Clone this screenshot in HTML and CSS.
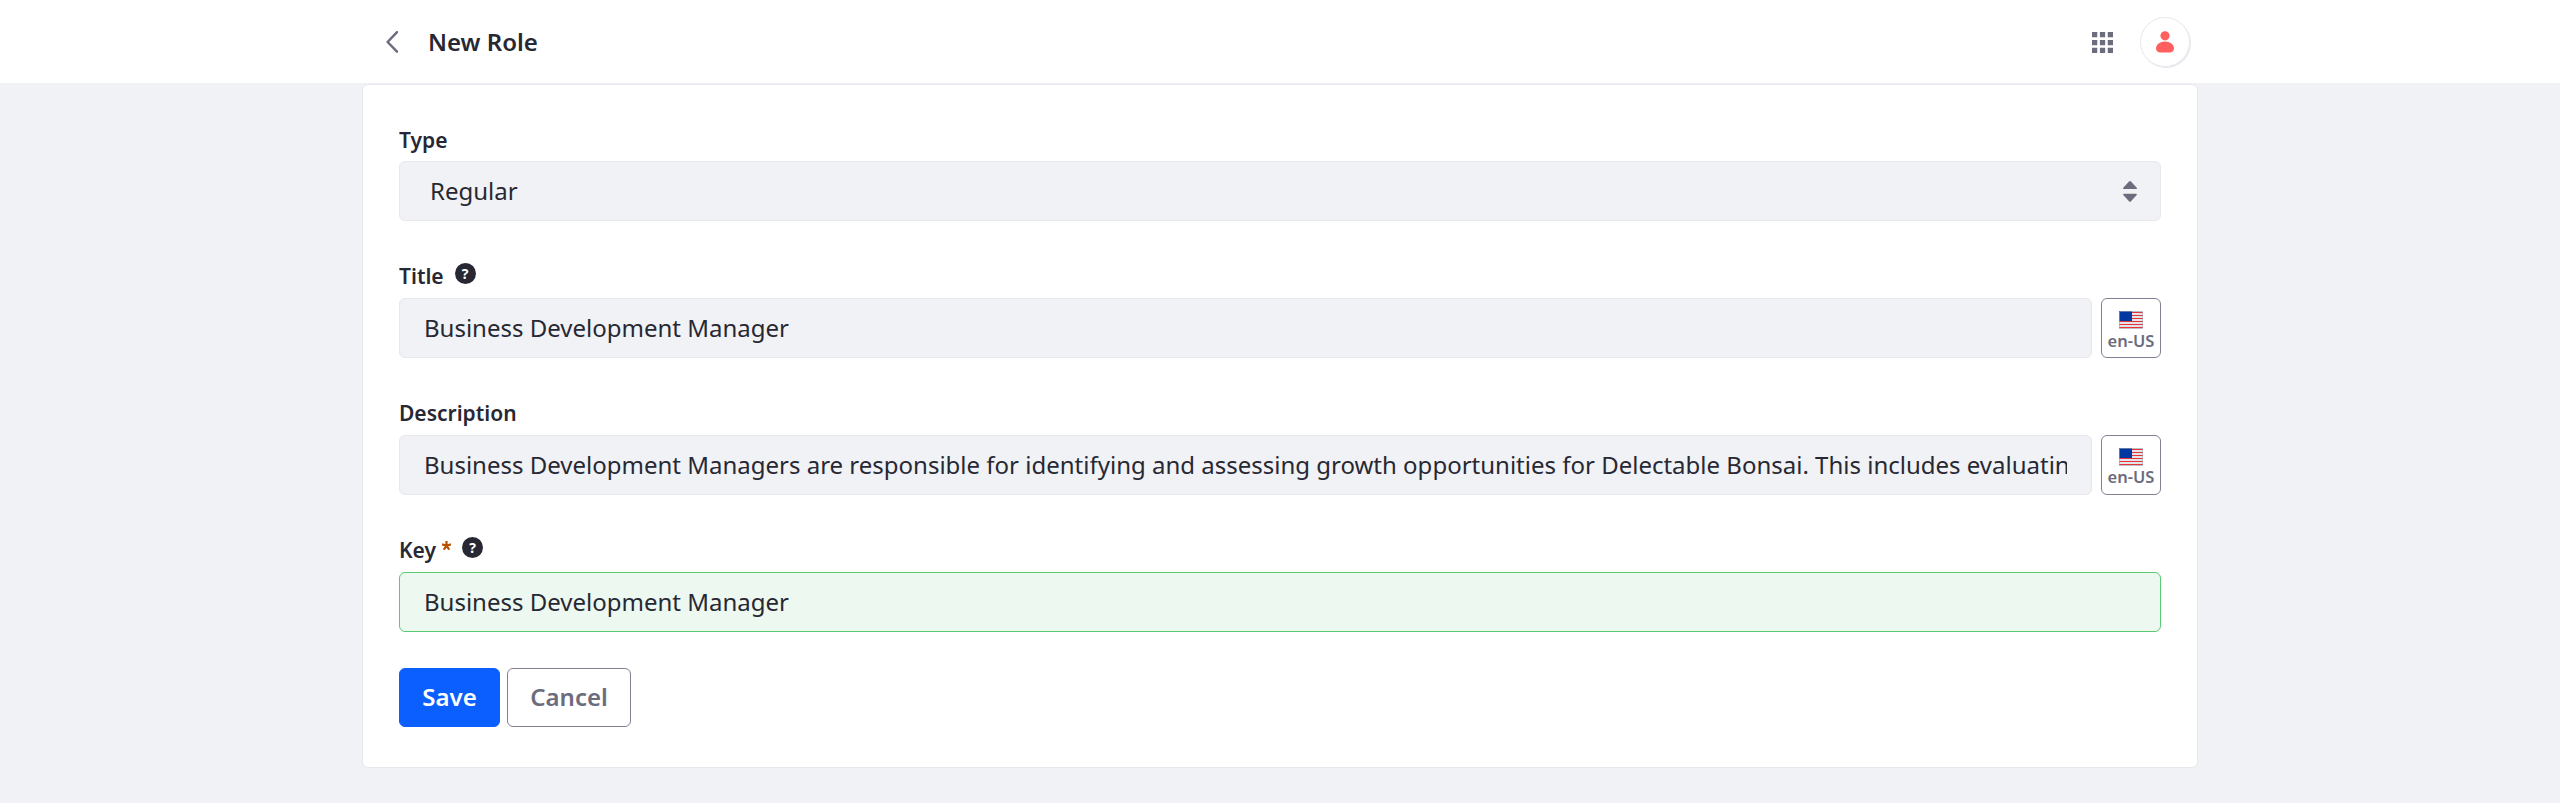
FILE: index.html
```html
<!DOCTYPE html>
<html lang="en-US">
<head>
<meta charset="utf-8">
<title>New Role</title>
<link rel="stylesheet" href="styles.css">
</head>
<body>
<header class="topbar">
  <div class="topbar-inner">
    <a class="back" aria-label="Back"><svg width="12" height="22" viewBox="0 0 12 22"><path d="M11 1.200 1.600 11 11 20.600" fill="none" stroke="currentColor" stroke-width="2.500" stroke-linecap="round" stroke-linejoin="round"/></svg></a>
    <h1 class="heading">New Role</h1>
    <svg class="apps" width="21" height="21" viewBox="0 0 21 21"><path d="M0 0h5.250v5.250H0zM7.900 0h5.250v5.250H7.900zM15.750 0H21v5.250h-5.250zM0 7.900h5.250v5.250H0zM7.900 7.900h5.250v5.250H7.900zM15.750 7.900H21v5.250h-5.250zM0 15.750h5.250V21H0zM7.900 15.750h5.250V21H7.900zM15.750 15.750H21V21h-5.250z" fill="currentColor"/></svg>
    <span class="avatar"><svg width="18" height="22" viewBox="0 0 18 22"><circle cx="9" cy="4.800" r="4.600" fill="currentColor"/><path d="M9 10.600c5 0 9 3 9 6.900 0 2.800-2 4-4.500 4h-9C2 21.500 0 20.300 0 17.500c0-3.900 4-6.900 9-6.900z" fill="currentColor"/></svg></span>
  </div>
</header>
<main class="card">
  <div class="field">
    <label class="label first">Type</label>
    <div class="control select"><span>Regular</span><svg width="14" height="21" viewBox="0 0 14 21"><path d="M6 .6q1-1 2 0l5.700 6.200q.7 1.200-.7 1.200H1q-1.400 0-.7-1.200zM6 20.200q1 1 2 0l5.700-6.200q.7-1.200-.7-1.200H1q-1.400 0-.7 1.200z" fill="currentColor"/></svg></div>
  </div>
  <div class="field">
    <label class="label">Title <span class="help">?</span></label>
    <div class="row">
      <div class="control"><span>Business Development Manager</span></div>
      <button class="locale"><svg width="24" height="18" viewBox="0 0 24 18"><path d="M0 0h24v18H0z" fill="#e3e3e8"/><path d="M0 1.500h24M0 4.500h24M0 7.500h24M0 10.500h24M0 13.500h24M0 16.500h24" stroke="#e7343a" stroke-width="1.200"/><path d="M0 0h13v10H0z" fill="#0037a1"/><path d="M.5 .5h23v17H.5z" fill="none" stroke="#a5a5b3" stroke-opacity=".6"/></svg>en-US</button>
    </div>
  </div>
  <div class="field">
    <label class="label">Description</label>
    <div class="row">
      <div class="control"><span>Business Development Managers are responsible for identifying and assessing growth opportunities for Delectable Bonsai. This includes evaluating</span></div>
      <button class="locale compact"><svg width="24" height="18" viewBox="0 0 24 18"><path d="M0 0h24v18H0z" fill="#e3e3e8"/><path d="M0 1.500h24M0 4.500h24M0 7.500h24M0 10.500h24M0 13.500h24M0 16.500h24" stroke="#e7343a" stroke-width="1.200"/><path d="M0 0h13v10H0z" fill="#0037a1"/><path d="M.5 .5h23v17H.5z" fill="none" stroke="#a5a5b3" stroke-opacity=".6"/></svg>en-US</button>
    </div>
  </div>
  <div class="field">
    <label class="label">Key <svg class="required" width="9" height="9" viewBox="0 0 9 9"><path d="M4.500 4.800V0M4.500 4.800 0 3.400M4.500 4.800 9 3.400M4.500 4.800 1.700 8.600M4.500 4.800 7.300 8.600" stroke="currentColor" stroke-width="2.200"/></svg><span class="help">?</span></label>
    <div class="control valid"><span>Business Development Manager</span></div>
  </div>
  <div class="actions">
    <button class="btn primary">Save</button>
    <button class="btn secondary">Cancel</button>
  </div>
</main>
</body>
</html>
```
FILE: styles.css
```css
* { box-sizing: border-box; }
body {
  margin: 0;
  background: #f1f2f5;
  color: #272833;
  font: 24px/36px "Noto Sans", sans-serif;
}
.topbar { height: 84px; background: #fff; border-bottom: 1px solid #f1f2f5; }
.topbar-inner {
  display: flex;
  align-items: center;
  width: 1836px;
  height: 84px;
  margin: 0 auto;
  padding: 0 8px 0 24px;
}
.back { display: flex; color: #6b6c7e; }
.heading { margin: 0 auto 0 30px; font-size: 24px; font-weight: 600; line-height: 36px; }
.apps { margin-right: 27px; color: #6b6c7e; }
.avatar {
  display: flex;
  align-items: center;
  justify-content: center;
  width: 50px;
  height: 50px;
  border: 1px solid #e7e7ed;
  border-radius: 50%;
  box-shadow: 1px 1px 0 #e7e7ed;
  color: #ff5f5f;
}
.card {
  width: 1836px;
  height: 684px;
  margin: 0 auto;
  padding: 36px;
  background: #fff;
  border: 1px solid #e7e7ed;
  border-radius: 6px;
}
.field { height: 137px; }
.label {
  display: flex;
  align-items: flex-start;
  height: 40px;
  padding-top: 2px;
  font-size: 21px;
  font-weight: 600;
  line-height: 32px;
}
.first { padding-top: 3px; }
.help {
  width: 21px;
  height: 21px;
  margin: 3px 0 0 11px;
  border-radius: 50%;
  background: #272833;
  color: #fff;
  font-size: 14px;
  font-weight: 700;
  line-height: 21px;
  text-align: center;
}
.required { margin: 7px 0 0 6px; color: #b95000; }
.row { display: flex; gap: 9px; }
.control {
  display: flex;
  flex: 1;
  align-items: center;
  min-width: 0;
  height: 60px;
  padding: 0 24px;
  background: #f1f2f5;
  border: 1px solid #e7e7ed;
  border-radius: 6px;
}
.control span { flex: 1; overflow: hidden; white-space: nowrap; }
.select { padding-left: 30px; padding-right: 23px; color: #6b6c7e; }
.select span { color: #272833; }
.valid { background: #edf8f0; border-color: #5aca75; }
.locale {
  display: flex;
  flex-direction: column;
  align-items: center;
  width: 60px;
  height: 60px;
  padding: 12px 0 0;
  border: 1px solid #857f94;
  border-radius: 6px;
  background: #fff;
  color: #6b6c7e;
  font: 600 16.5px/24px "Noto Sans", sans-serif;
}
.compact { line-height: 22px; }
.actions { display: flex; gap: 7px; margin-top: -1px; }
.btn {
  height: 59px;
  padding: 0 0 2px;
  border: 1px solid #857f94;
  border-radius: 6px;
  background: #fff;
  color: #6b6c7e;
  font: 600 24px/36px "Noto Sans", sans-serif;
}
.primary { width: 101px; border-color: #0b5fff; background: #0b5fff; color: #fff; }
.secondary { width: 124px; }
```
